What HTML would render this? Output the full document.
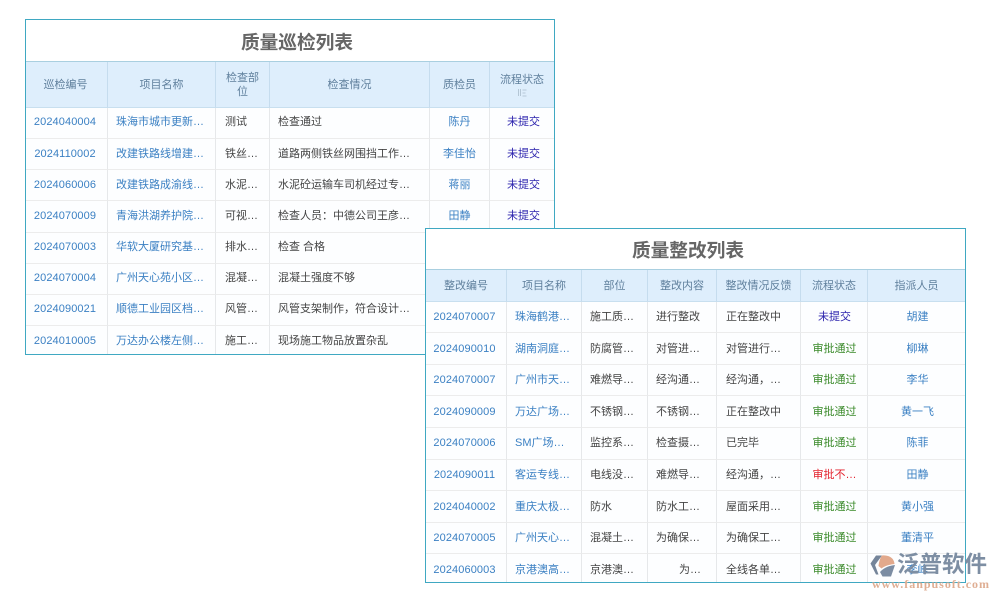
<!DOCTYPE html>
<html lang="zh">
<head>
<meta charset="utf-8">
<title>质量列表</title>
<style>
html,body{margin:0;padding:0;background:#fff;}
body{width:1000px;height:600px;position:relative;overflow:hidden;font-family:"Liberation Sans","Noto Sans CJK SC",sans-serif;font-size:11px;color:#444;}
.p{position:absolute;box-sizing:border-box;border:1px solid #3fa8c2;background:#fff;overflow:hidden;filter:blur(.3px);}
.t{font-size:18.700px;font-weight:bold;color:#666;text-align:center;box-sizing:border-box;border-bottom:1px solid #a9cfe0;background:#fff;}
table{border-collapse:separate;border-spacing:0;table-layout:fixed;}
td,th{box-sizing:border-box;padding:0;font-weight:normal;font-size:11px;line-height:14px;white-space:nowrap;border-right:1px solid #e6e8ea;border-bottom:1px solid #ececec;text-align:left;padding-left:8px;background:#fdfeff;overflow:hidden;}
th{background:#deeefc;color:#5f7f9c;text-align:center;padding:0 4px;border-right:1px solid #c5dcee;border-bottom:1px solid #c8dfef;white-space:normal;}
td:last-child,th:last-child{border-right:none;}
tr:last-child td{border-bottom:none;}
td.c{text-align:center;padding-left:0;}
td.n{text-align:center;padding:0 3px 0 0;letter-spacing:.1px;}
.up td{padding-bottom:2px;}
.up td.n{padding-bottom:2px;}
.dn td{padding-top:2px;}
.dn td.n{padding-top:2px;}
.l{color:#3b80c3;}
.u{color:#2b22ad;}
.g{color:#3a8a2a;}
.r{color:#e3222e;}
td.s1{padding-left:3px;}
td.s2{padding-left:1px;}
td.s3{padding-left:2px;}
td.p9{padding-left:9px;}
</style>
</head>
<body>

<div class="p" style="left:25px;top:19px;width:530px;height:336px;">
<div class="t" style="height:42px;line-height:45px;padding-left:14px;">质量巡检列表</div>
<table style="width:528px;">
<colgroup><col style="width:82px"><col style="width:108px"><col style="width:54px"><col style="width:160px"><col style="width:60px"><col style="width:64px"></colgroup>
<tr style="height:46px"><th style="padding-right:6px">巡检编号</th><th>项目名称</th><th>检查部<br>位</th><th>检查情况</th><th>质检员</th><th>流程状态<br><svg width="10" height="9" viewBox="0 0 10 9" style="display:block;margin:1px auto 0"><path d="M1.500 1v7M3.500 1v7M5.500 2h4M5.500 5h3M5.500 8h4" stroke="#a9bccb" stroke-width=".8" fill="none"/></svg></th></tr>
<tr class="up" style="height:31px"><td class="n l">2024040004</td><td class="l">珠海市城市更新…</td><td class="p9">测试</td><td>检查通过</td><td class="c l">陈丹</td><td class="c u s1">未提交</td></tr>
<tr style="height:31px"><td class="n l">2024110002</td><td class="l">改建铁路线增建…</td><td class="p9">铁丝…</td><td>道路两侧铁丝网围挡工作…</td><td class="c l">李佳怡</td><td class="c u s1">未提交</td></tr>
<tr style="height:31px"><td class="n l">2024060006</td><td class="l">改建铁路成渝线…</td><td class="p9">水泥…</td><td>水泥砼运输车司机经过专…</td><td class="c l">蒋丽</td><td class="c u s1">未提交</td></tr>
<tr class="up" style="height:32px"><td class="n l">2024070009</td><td class="l">青海洪湖养护院…</td><td class="p9">可视…</td><td>检查人员：中德公司王彦…</td><td class="c l">田静</td><td class="c u s1">未提交</td></tr>
<tr class="up" style="height:31px"><td class="n l">2024070003</td><td class="l">华软大厦研究基…</td><td class="p9">排水…</td><td>检查 合格</td><td class="c l"></td><td class="c u"></td></tr>
<tr class="up" style="height:31px"><td class="n l">2024070004</td><td class="l">广州天心苑小区…</td><td class="p9">混凝…</td><td>混凝土强度不够</td><td class="c l"></td><td class="c u"></td></tr>
<tr class="up" style="height:31px"><td class="n l">2024090021</td><td class="l">顺德工业园区档…</td><td class="p9">风管…</td><td>风管支架制作，符合设计…</td><td class="c l"></td><td class="c u"></td></tr>
<tr style="height:29px"><td class="n l">2024010005</td><td class="l">万达办公楼左侧…</td><td class="p9">施工…</td><td>现场施工物品放置杂乱</td><td class="c l"></td><td class="c u"></td></tr>
</table>
</div>

<div class="p" style="left:425px;top:228px;width:541px;height:355px;">
<div class="t" style="height:41px;line-height:43px;padding-right:15px;">质量整改列表</div>
<table style="width:539px;">
<colgroup><col style="width:81px"><col style="width:75px"><col style="width:66px"><col style="width:69px"><col style="width:84px"><col style="width:67px"><col style="width:97px"></colgroup>
<tr style="height:32px"><th>整改编号</th><th>项目名称</th><th>部位</th><th>整改内容</th><th>整改情况反馈</th><th>流程状态</th><th>指派人员</th></tr>
<tr style="height:31px"><td class="n l">2024070007</td><td class="l">珠海鹤港…</td><td>施工质…</td><td>进行整改</td><td class="p9">正在整改中</td><td class="c u s2">未提交</td><td class="c l s3">胡建</td></tr>
<tr style="height:32px"><td class="n l">2024090010</td><td class="l">湖南洞庭…</td><td>防腐管…</td><td>对管进…</td><td class="p9">对管进行…</td><td class="c g s2">审批通过</td><td class="c l s3">柳琳</td></tr>
<tr style="height:31px"><td class="n l">2024070007</td><td class="l">广州市天…</td><td>难燃导…</td><td>经沟通…</td><td class="p9">经沟通，…</td><td class="c g s2">审批通过</td><td class="c l s3">李华</td></tr>
<tr style="height:32px"><td class="n l">2024090009</td><td class="l">万达广场…</td><td>不锈钢…</td><td>不锈钢…</td><td class="p9">正在整改中</td><td class="c g s2">审批通过</td><td class="c l s3">黄一飞</td></tr>
<tr class="up" style="height:32px"><td class="n l">2024070006</td><td class="l">SM广场…</td><td>监控系…</td><td>检查摄…</td><td class="p9">已完毕</td><td class="c g s2">审批通过</td><td class="c l s3">陈菲</td></tr>
<tr style="height:31px"><td class="n l">2024090011</td><td class="l">客运专线…</td><td>电线没…</td><td>难燃导…</td><td class="p9">经沟通，…</td><td class="c r s2">审批不…</td><td class="c l s3">田静</td></tr>
<tr style="height:32px"><td class="n l">2024040002</td><td class="l">重庆太极…</td><td>防水</td><td>防水工…</td><td class="p9">屋面采用…</td><td class="c g s2">审批通过</td><td class="c l s3">黄小强</td></tr>
<tr style="height:31px"><td class="n l">2024070005</td><td class="l">广州天心…</td><td>混凝土…</td><td>为确保…</td><td class="p9">为确保工…</td><td class="c g s2">审批通过</td><td class="c l s3">董清平</td></tr>
<tr class="dn" style="height:29px"><td class="n l">2024060003</td><td class="l">京港澳高…</td><td>京港澳…</td><td style="padding-left:31px">为…</td><td class="p9">全线各单…</td><td class="c g s2">审批通过</td><td class="c l s3">李峰</td></tr>
</table>
</div>

<svg width="34" height="30" viewBox="0 0 34 30" style="position:absolute;left:866px;top:550px">
<path d="M4.500 13.500L10 5.500h6L9 15l3.500 9.500H10z" fill="#75859a"/>
<path d="M16 5.500c5-.5 12 1 12.500 8.500-5 .5-10 2-13 4.500L12.500 16C13 12 14 8 16 5.500z" fill="#e2a98c"/>
<path d="M16 20c4-3 8-4.500 13-5L25 26.500h-8.500L14 22z" fill="#7c8da3"/>
</svg>
<div style="position:absolute;left:897px;top:552px;width:95px;font-size:22.500px;line-height:26px;font-weight:bold;color:#7d8ea3;white-space:nowrap;filter:blur(.3px);">泛普软件</div>
<div style="position:absolute;left:872px;top:577px;width:122px;font-family:'Liberation Serif',serif;font-size:12px;line-height:14px;font-weight:bold;letter-spacing:.98px;color:#dfae93;white-space:nowrap;">www.fanpusoft.com</div>

</body>
</html>
